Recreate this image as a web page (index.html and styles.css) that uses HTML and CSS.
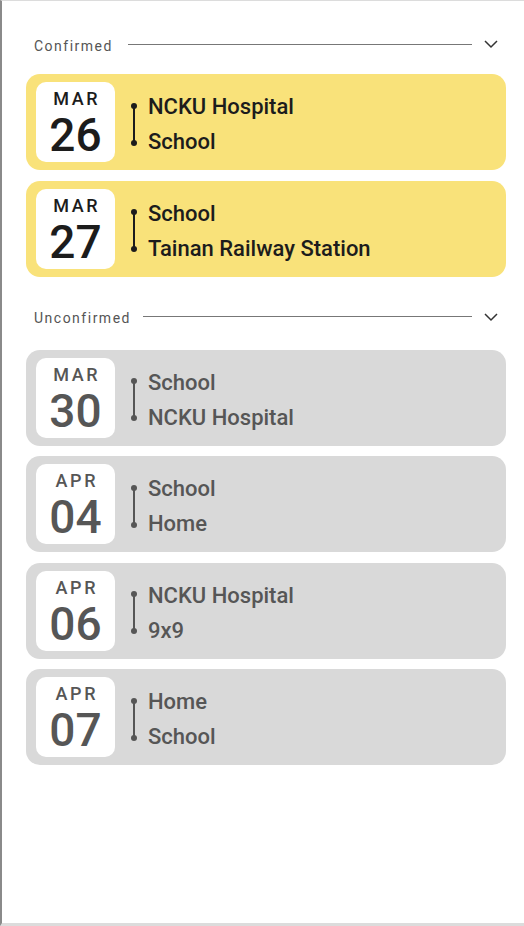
FILE: index.html
```html
<!DOCTYPE html>
<html lang="en">
<head>
<meta charset="utf-8">
<title>Rides</title>
<link rel="stylesheet" href="styles.css">
</head>
<body>
<div class="screen">
  <section class="group">
    <div class="group-head">
      <span class="label">Confirmed</span>
      <span class="rule"></span>
      <svg class="chev" width="24" height="24" viewBox="0 0 24 24"><path d="M6 9l6 6 6-6" fill="none" stroke="#333" stroke-width="1.5"/></svg>
    </div>
    <div class="cards">
      <div class="card confirmed">
        <div class="date"><span class="mon">MAR</span><span class="day">26</span></div>
        <div class="route"><div class="track"><i class="dot"></i><i class="line"></i><i class="dot"></i></div>
          <div class="names"><span>NCKU Hospital</span><span>School</span></div></div>
      </div>
      <div class="card confirmed">
        <div class="date"><span class="mon">MAR</span><span class="day">27</span></div>
        <div class="route"><div class="track"><i class="dot"></i><i class="line"></i><i class="dot"></i></div>
          <div class="names"><span>School</span><span>Tainan Railway Station</span></div></div>
      </div>
    </div>
  </section>
  <section class="group second">
    <div class="group-head">
      <span class="label">Unconfirmed</span>
      <span class="rule"></span>
      <svg class="chev" width="24" height="24" viewBox="0 0 24 24"><path d="M6 9l6 6 6-6" fill="none" stroke="#333" stroke-width="1.5"/></svg>
    </div>
    <div class="cards">
      <div class="card pending">
        <div class="date"><span class="mon">MAR</span><span class="day">30</span></div>
        <div class="route"><div class="track"><i class="dot"></i><i class="line"></i><i class="dot"></i></div>
          <div class="names"><span>School</span><span>NCKU Hospital</span></div></div>
      </div>
      <div class="card pending">
        <div class="date"><span class="mon">APR</span><span class="day">04</span></div>
        <div class="route"><div class="track"><i class="dot"></i><i class="line"></i><i class="dot"></i></div>
          <div class="names"><span>School</span><span>Home</span></div></div>
      </div>
      <div class="card pending">
        <div class="date"><span class="mon">APR</span><span class="day">06</span></div>
        <div class="route"><div class="track"><i class="dot"></i><i class="line"></i><i class="dot"></i></div>
          <div class="names"><span>NCKU Hospital</span><span>9x9</span></div></div>
      </div>
      <div class="card pending">
        <div class="date"><span class="mon">APR</span><span class="day">07</span></div>
        <div class="route"><div class="track"><i class="dot"></i><i class="line"></i><i class="dot"></i></div>
          <div class="names"><span>Home</span><span>School</span></div></div>
      </div>
    </div>
  </section>
</div>
</body>
</html>
```

FILE: styles.css
```css
* { box-sizing: border-box; }
html, body { margin: 0; padding: 0; background: #fff; }
body { font-family: Roboto, "Noto Sans", sans-serif; }

.screen {
  width: 524px;
  height: 926px;
  border-left: 2px solid #8a8a8a;
  border-top: 1px solid #dcdcdc;
  border-bottom: 3px solid #dcdcdc;
  padding: 31px 18px 0 24px;
  overflow: hidden;
}

.group-head {
  display: flex;
  align-items: center;
  height: 24px;
  padding-left: 8px;
  margin-bottom: 18px;
}
.second { margin-top: 28px; }
.second .group-head { margin-bottom: 21px; }
.label {
  font-size: 14px;
  letter-spacing: 1.5px;
  color: #555;
  line-height: 20px;
  padding-top: 3px;
}
.rule {
  flex: 1;
  height: 1px;
  background: #777;
  margin: 0 7px 0 15px;
}
.second .rule { margin-left: 12px; }
.chev { display: block; margin-right: 3px; }

.cards { display: flex; flex-direction: column; gap: 10.5px; }

.card {
  display: flex;
  align-items: center;
  height: 96px;
  padding: 0 10px;
  border-radius: 14px;
}
.confirmed { background: #f9e27a; color: #1c1c1c; }
.pending { background: #d9d9d9; color: #565656; }

.date {
  width: 79px;
  height: 80px;
  background: #fff;
  border-radius: 10px;
  display: flex;
  flex-direction: column;
  align-items: center;
  justify-content: flex-start;
  padding-top: 7px;
  font-weight: 500;
}
.mon { font-size: 18px; line-height: 20px; letter-spacing: 2.6px; margin-left: 2.6px; }
.day { font-size: 46px; line-height: 46px; margin-top: 3px; font-weight: 500; }

.route { display: flex; align-items: center; margin-left: 16px; }
.track {
  display: flex;
  flex-direction: column;
  align-items: center;
  width: 6px;
  height: 47px;
  padding-top: 4px;
}
.dot { display: block; flex: none; width: 6px; height: 6px; border-radius: 50%; background: currentColor; }
.line { display: block; flex: 1; width: 2px; background: currentColor; margin: -1px 0; }
.pending .line { width: 1.5px; }
.names {
  display: flex;
  flex-direction: column;
  margin-left: 11px;
  padding-top: 4px;
  font-size: 22px;
  font-weight: 500;
  line-height: 35px;
}
```
